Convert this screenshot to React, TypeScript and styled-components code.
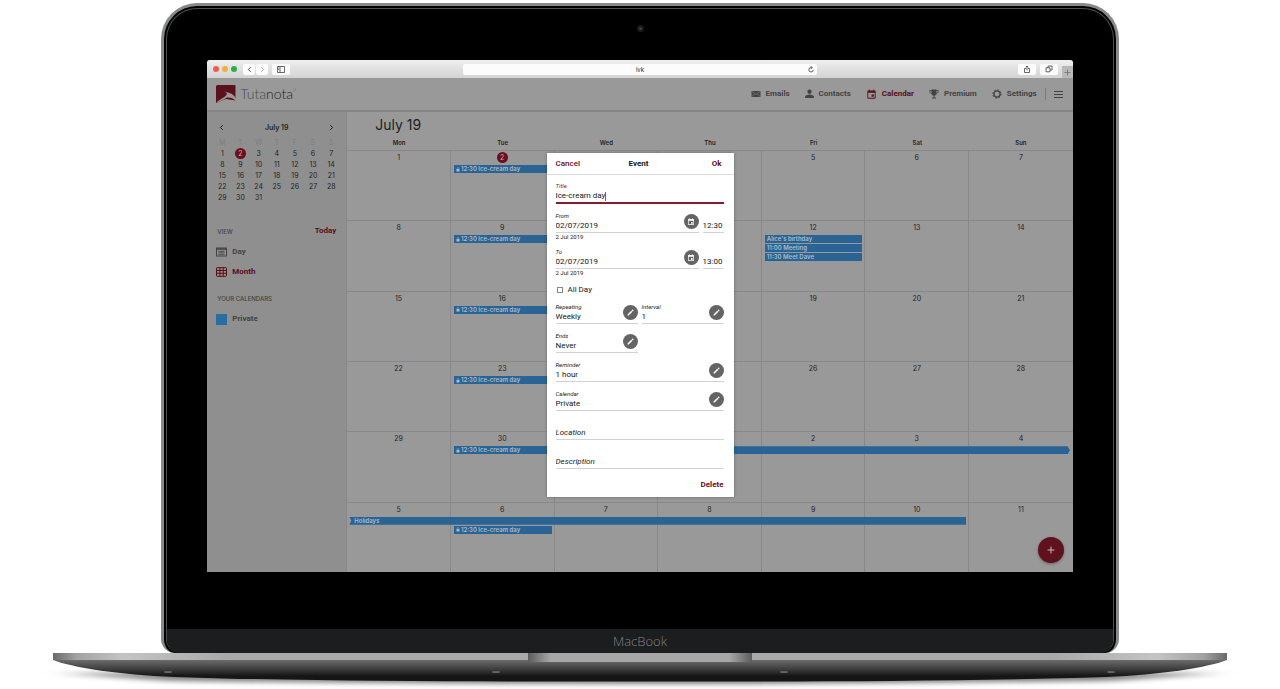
import React from "react";
import styled, { createGlobalStyle, css } from "styled-components";

const c = {
  ink: "#1f1f1f",
  muted: "#434343",
  accent: "#5a0d17",
  accentBright: "#861a30",
  line: "#888888",
  sheet: "#999999",
  side: "#8f8f8f",
  event: "#296494",
};

const GlobalStyle = createGlobalStyle`
  * { box-sizing: border-box; }
  body { margin: 0; background: #fff; font-family: Inter, "Liberation Sans", sans-serif; color: ${c.ink}; }
  button, input, select { font: inherit; color: inherit; border: 0; margin: 0; padding: 0; background: none; border-radius: 0; }
  button { cursor: pointer; }
  a { color: inherit; text-decoration: none; }
  svg { display: block; }
`;

/* ---------- laptop ---------- */

const Page = styled.div`
  padding-top: 3px;
  overflow: hidden;
`;

const Lid = styled.div`
  margin: 0 12.6%;
  padding: 2px 2px 0;
  border: 3px solid #87898a;
  border-bottom: 0;
  border-radius: 36px 36px 14px 14px;
  background: #000;
`;

const Bezel = styled.div`
  display: flex;
  flex-direction: column;
  overflow: hidden;
  border: 1px solid #4b4d4e;
  border-bottom: 0;
  border-radius: 31px 31px 14px 14px;
  background: #000;
`;

const CameraBar = styled.div`
  display: flex;
  justify-content: center;
  height: 51px;
  padding-top: 16px;
`;

const Camera = styled.span`
  width: 7px;
  height: 7px;
  border: 2px solid #16181a;
  border-radius: 50%;
  background: #3a3f46;
`;

const Chin = styled.div`
  margin-top: 57px;
  height: 24px;
  background: #1b1d1f;
  color: #818385;
  text-align: center;
  font: 300 13px/24px "Open Sans", sans-serif;
`;

const BaseArt = styled.svg`
  width: 100%;
  height: 36px;
`;

/* ---------- browser ---------- */

const Screen = styled.div`
  margin: 0 40px;
  border-radius: 3px 3px 0 0;
  overflow: hidden;
  background: ${c.sheet};
`;

const BrowserBar = styled.div`
  display: grid;
  grid-template-columns: 1fr 41% 1fr;
  align-items: center;
  height: 18px;
  background: linear-gradient(#efefef, #d3d3d3);
`;

const BarGroup = styled.div<{ $end?: boolean }>`
  display: flex;
  align-items: center;
  gap: 4px;
  height: 18px;
  padding-left: 6px;
  ${(p) => p.$end && css`justify-content: flex-end; padding-left: 0;`}
`;

const Light = styled.span<{ $color: string }>`
  width: 6px;
  height: 6px;
  border-radius: 50%;
  margin-right: -1px;
  background: ${(p) => p.$color};
`;

const ChromeButtons = styled.div`
  display: flex;
  gap: 1px;
  margin-left: 3px;
`;

const ChromeButton = styled.button<{ $wide?: boolean; $dim?: boolean }>`
  display: grid;
  place-items: center;
  width: ${(p) => (p.$wide ? 18 : 12)}px;
  height: 11px;
  border-radius: 2px;
  background: #fcfcfc;
  color: ${(p) => (p.$dim ? "#a5a5a5" : "#444")};
`;

const NewTab = styled.button`
  display: grid;
  place-items: center;
  align-self: flex-end;
  width: 11px;
  height: 12px;
  background: #b9b9b9;
  color: #777;
`;

const Address = styled.div`
  display: flex;
  align-items: center;
  height: 11px;
  padding: 0 3px;
  border-radius: 2px;
  background: #fcfcfc;
`;

const AddressInput = styled.input`
  flex: 1;
  min-width: 0;
  padding-left: 6px;
  text-align: center;
  font-size: 6px;
  line-height: 11px;
  outline: 0;
`;

/* ---------- application ---------- */

const AppArea = styled.div`
  position: relative;
`;

const Header = styled.header`
  display: flex;
  align-items: center;
  justify-content: space-between;
  height: 34px;
  padding: 0 10px 0 9px;
  border-bottom: 2px solid #858585;
`;

const Logo = styled.a`
  display: flex;
  align-items: center;
  gap: 4px;
  font: 300 14px/18px Lato, sans-serif;
  color: #4a4a4a;
  span { color: #222; }
  sup { font-size: 4px; line-height: 4px; vertical-align: 7px; }
`;

const Nav = styled.nav`
  display: flex;
  align-items: center;
  gap: 15px;
`;

const NavLink = styled.a<{ $active?: boolean }>`
  display: flex;
  align-items: center;
  gap: 5px;
  font-family: Roboto, sans-serif;
  font-size: 8px;
  line-height: 10px;
  font-weight: 700;
  color: ${(p) => (p.$active ? c.accent : c.muted)};
`;

const MenuButton = styled.button`
  margin-left: -7px;
  padding-left: 8px;
  border-left: 1px solid #7b7b7b;
  color: ${c.muted};
`;

const Body = styled.div`
  display: flex;
`;

const Sidebar = styled.aside`
  flex: 0 0 140px;
  padding: 10px 6px 0;
  border-right: 1px solid ${c.line};
  background: ${c.side};
`;

const MonthPicker = styled.div`
  display: flex;
  justify-content: space-between;
  align-items: center;
  height: 11px;
  padding: 0 6px;
  font-size: 7px;
  font-weight: 600;
`;

const MiniTable = styled.table`
  width: 100%;
  margin-top: 4px;
  border-collapse: collapse;
  table-layout: fixed;
  font-size: 7px;
  line-height: 11px;
  text-align: center;
  th, td { padding: 0; height: 11px; }
  th { font-weight: 400; color: #7e7e7e; }
`;

const Dot = styled.span`
  display: inline-block;
  width: 11px;
  height: 11px;
  line-height: 11px;
  border-radius: 50%;
  background: #6b0f1d;
  color: #c9a9ad;
`;

const SideHead = styled.div<{ $gap: number }>`
  display: flex;
  justify-content: space-between;
  align-items: center;
  height: 12px;
  margin-top: ${(p) => p.$gap}px;
  padding: 0 4px;
  font-size: 6px;
  font-weight: 500;
  color: ${c.muted};
`;

const TodayButton = styled.button`
  font-family: Roboto, sans-serif;
  font-size: 8px;
  line-height: 12px;
  font-weight: 700;
  color: ${c.accent};
`;

const SideLink = styled.button<{ $active?: boolean }>`
  display: flex;
  align-items: center;
  gap: 5px;
  width: 100%;
  height: 20px;
  padding: 0 3px;
  font-family: Roboto, sans-serif;
  font-size: 8px;
  line-height: 10px;
  font-weight: 700;
  color: ${(p) => (p.$active ? c.accent : c.muted)};
`;

const SideList = styled.div`
  margin-top: 5px;
`;

const Swatch = styled.span`
  width: 11px;
  height: 11px;
  background: #2b6da1;
`;

const Main = styled.main`
  flex: 1;
  min-width: 0;
`;

const MonthTitle = styled.h1`
  margin: 0;
  padding: 4px 28px 0;
  font-size: 14px;
  line-height: 18px;
  font-weight: 400;
`;

const Weekdays = styled.div`
  display: grid;
  grid-template-columns: repeat(7, 1fr);
  padding: 5px 0 3px;
  font-size: 6px;
  line-height: 8px;
  font-weight: 600;
  text-align: center;
`;

const Month = styled.div`
  display: grid;
  grid-template-rows: repeat(6, 1fr);
  min-height: 422px;
`;

const Week = styled.section`
  display: grid;
  grid-template-columns: repeat(7, 1fr);
  grid-template-rows: 13px 8px 8px 8px 1fr;
  row-gap: 1px;
  border-top: 1px solid ${c.line};
`;

const DayCell = styled.div<{ $col: number }>`
  grid-row: 1 / -1;
  grid-column: ${(p) => p.$col};
  padding-top: 1px;
  border-right: ${(p) => (p.$col < 7 ? `1px solid ${c.line}` : "0")};
  text-align: center;
  font-size: 7px;
  line-height: 11px;
`;

const EventBar = styled.a<{ $from: number; $to: number; $row: number; $cap?: "left" | "right" }>`
  grid-column: ${(p) => p.$from} / ${(p) => p.$to + 1};
  grid-row: ${(p) => p.$row + 1};
  display: flex;
  align-items: center;
  gap: 1px;
  margin: 0 3px;
  padding-left: 2px;
  background: ${c.event};
  color: #a9bccb;
  font-size: 6px;
  line-height: 8px;
  font-weight: 600;
  white-space: nowrap;
  overflow: hidden;
  ${(p) => p.$cap === "left" && css`
    margin-left: 2px;
    padding-left: 5px;
    clip-path: polygon(0 0, 100% 0, 100% 100%, 0 100%, 2px 50%);
  `}
  ${(p) => p.$cap === "right" && css`
    clip-path: polygon(0 0, calc(100% - 2px) 0, 100% 50%, calc(100% - 2px) 100%, 0 100%);
  `}
`;

const AddButton = styled.button`
  position: absolute;
  right: 9px;
  bottom: 9px;
  display: grid;
  place-items: center;
  width: 26px;
  height: 26px;
  border-radius: 50%;
  background: #5f121e;
  color: #c9b5b8;
  box-shadow: 0 1px 3px rgba(0, 0, 0, 0.35);
`;

/* ---------- dialog ---------- */

const Overlay = styled.div`
  position: absolute;
  inset: 0;
  display: grid;
  place-items: center;
  pointer-events: none;
`;

const Dialog = styled.form`
  width: 187px;
  background: #fff;
  pointer-events: auto;
  color: #161616;
  font-family: Roboto, sans-serif;
  font-size: 8px;
  line-height: 11px;
  box-shadow: 0 0 3px rgba(0, 0, 0, 0.3);
`;

const DialogHead = styled.div`
  display: grid;
  grid-template-columns: 1fr auto 1fr;
  align-items: center;
  height: 22px;
  padding: 0 12px 0 9px;
  border-bottom: 1px solid #d9dcde;
`;

const DialogTitle = styled.h2`
  margin: 0;
  font-size: 8px;
  font-weight: 700;
`;

const TextButton = styled.button<{ $bold?: boolean; $end?: boolean }>`
  justify-self: ${(p) => (p.$end ? "end" : "start")};
  line-height: 11px;
  color: #6b0a1d;
  font-weight: ${(p) => (p.$bold ? 700 : 500)};
`;

const DialogBody = styled.div`
  padding: 0 10px 0 9px;
`;

const Split = styled.div<{ $columns: string }>`
  display: grid;
  grid-template-columns: ${(p) => p.$columns};
  column-gap: 4px;
`;

const FieldBox = styled.div<{ $active?: boolean }>`
  display: flex;
  align-items: flex-end;
  height: 29px;
  border-bottom: ${(p) => (p.$active ? `2px solid ${c.accentBright}` : "1px solid #d2d2d2")};
`;

const FieldText = styled.div`
  flex: 1;
  min-width: 0;
`;

const FieldLabel = styled.label<{ $active?: boolean }>`
  display: block;
  font-size: 6px;
  line-height: 9px;
  font-style: italic;
  color: ${(p) => (p.$active ? c.accentBright : "#222")};
`;

const valueStyle = css`
  display: block;
  width: 100%;
  height: 12px;
  line-height: 12px;
  outline: 0;
`;

const ValueInput = styled.input<{ $fit?: boolean }>`
  ${valueStyle}
  ${(p) => p.$fit && css`width: auto; field-sizing: content;`}
  &::placeholder { color: #222; font-style: italic; opacity: 1; }
`;

const ValueSelect = styled.select`
  ${valueStyle}
  appearance: none;
`;

const CaretLine = styled.div`
  display: flex;
  align-items: center;
`;

const Caret = styled.span`
  width: 1px;
  height: 9px;
  background: #666;
`;

const RoundButton = styled.button`
  display: grid;
  place-items: center;
  flex: 0 0 15px;
  height: 15px;
  margin-bottom: 3px;
  border-radius: 50%;
  background: #646464;
  color: #fff;
`;

const Helper = styled.div`
  height: 7px;
  font-size: 6px;
  line-height: 8px;
`;

const CheckRow = styled.label`
  display: flex;
  align-items: flex-end;
  gap: 5px;
  height: 19px;
  padding-left: 1px;
  line-height: 10px;
`;

const Check = styled.input`
  appearance: none;
  width: 6px;
  height: 6px;
  margin-bottom: 2px;
  border: 1px solid #888;
`;

const DialogFoot = styled.div`
  display: flex;
  justify-content: flex-end;
  align-items: center;
  height: 28px;
  padding-top: 2px;
`;

/* ---------- icons ---------- */

const stroke = { fill: "none", stroke: "currentColor" } as const;

const Chevron = ({ flip }: { flip?: boolean }) => (
  <svg width="5" height="7" viewBox="0 0 5 7" {...stroke}>
    <path d={flip ? "M1.300 1.200 3.600 3.500 1.300 5.800" : "M3.700 1.200 1.400 3.500 3.700 5.800"} />
  </svg>
);

const CalendarGlyph = ({ size }: { size: number }) => (
  <svg width={size} height={size} viewBox="0 0 24 24" fill="currentColor">
    <path d="M17 12h-5v5h5v-5zM16 1v2H8V1H6v2H5a2 2 0 0 0-2 2v14a2 2 0 0 0 2 2h14a2 2 0 0 0 2-2V5a2 2 0 0 0-2-2h-1V1h-2zm3 18H5V8h14v11z" />
  </svg>
);

const MailGlyph = () => (
  <svg width="10" height="10" viewBox="0 0 20 20">
    <rect x="1" y="4" width="18" height="12" fill="currentColor" />
    <path d="m2 5 8 6 8-6M2 15l5-5m11 5-5-5" fill="none" stroke={c.sheet} strokeWidth="1" />
  </svg>
);

const PersonGlyph = () => (
  <svg width="9" height="10" viewBox="0 0 18 20" fill="currentColor">
    <circle cx="9" cy="5.5" r="4.3" />
    <path d="M0 18v-2c0-3 5-5 9-5s9 2 9 5v2z" />
  </svg>
);

const TrophyGlyph = () => (
  <svg width="10" height="10" viewBox="0 0 20 20">
    <path d="M5 1h10v6c0 4-2 6-4 6.500V17h3v2H6v-2h3v-3.500C7 13 5 11 5 7z" fill="currentColor" />
    <path d="M5 3H1.500c0 4 1.500 6 4.500 7m9-7h3.500c0 4-1.500 6-4.500 7" {...stroke} strokeWidth="1.800" />
  </svg>
);

const GearGlyph = () => (
  <svg width="10" height="10" viewBox="0 0 20 20" {...stroke}>
    <circle cx="10" cy="10" r="6.200" strokeWidth="2.600" />
    <circle cx="10" cy="10" r="8.300" strokeWidth="2" strokeDasharray="3.260 3.260" />
  </svg>
);

const Pencil = () => (
  <svg width="9" height="9" viewBox="0 0 24 24" fill="currentColor">
    <path d="M4 17v3h3L17 10l-3-3L4 17zM20 7a1 1 0 0 0 0-1l-2-2a1 1 0 0 0-1 0l-2 2 3 3 2-2z" />
  </svg>
);

const Plus = ({ size }: { size: number }) => (
  <svg width={size} height={size} viewBox="0 0 8 8" {...stroke}>
    <path d="M4 .5v7M.5 4h7" />
  </svg>
);

const LockGlyph = () => (
  <svg width="4" height="5" viewBox="0 0 8 10">
    <rect x="1" y="4" width="6" height="5" fill="currentColor" />
    <path d="M2.500 4V2.500a1.500 1.500 0 0 1 3 0V4" {...stroke} />
  </svg>
);

const AgendaGlyph = () => (
  <svg width="11" height="10" viewBox="0 0 11 10" {...stroke}>
    <rect x=".5" y="1" width="10" height="8" />
    <path d="M1 2h9" strokeWidth="1.500" />
    <path d="M2.500 4.300h6M2.500 5.900h6M2.500 7.500h6" strokeWidth="1.200" opacity=".7" />
  </svg>
);

const GridGlyph = () => (
  <svg width="11" height="10" viewBox="0 0 11 10" {...stroke}>
    <rect x=".5" y=".7" width="10" height="8.600" rx=".6" />
    <path d="M.5 3.500h10M.5 6.300h10M3.900 .7v8.600M7.200 .7v8.600" />
  </svg>
);

const LogoMark = () => (
  <svg width="20" height="18" viewBox="0 0 20 18">
    <path d="M1.500 0H18.500a1 1 0 0 1 1 1v14.500L10 14 0 18V1.500A1.500 1.500 0 0 1 1.500 0z" fill="#5b101e" />
    <path d="M7 6.200c3 .9 4.200 1.600 3.800 3C9.900 12 4 13.800 0 18c4-2 8.200-3.300 10.300-5.300 3.400-.6 6.600 .2 9.700 3.600V13.500c-1.500-2.800-4-4.600-6.600-5.400C11.500 7.300 9 6.700 7 6.200z" fill="#9b9797" />
  </svg>
);

const LaptopBase = () => (
  <BaseArt viewBox="0 0 1280 36" preserveAspectRatio="none" aria-hidden="true">
    <defs>
      <linearGradient id="under" x1="0" y1="0" x2="0" y2="1">
        <stop offset="0.240" stopColor="#6c6c6c" />
        <stop offset="0.600" stopColor="#383838" />
        <stop offset="0.800" stopColor="#161616" />
        <stop offset="1" stopColor="#151515" />
      </linearGradient>
      <linearGradient id="edge">
        <stop offset="0" stopColor="#6a6a6a" />
        <stop offset="0.020" stopColor="#a2a2a2" />
        <stop offset="0.060" stopColor="#c4c4c4" />
        <stop offset="0.150" stopColor="#a8a8a8" />
        <stop offset="0.850" stopColor="#a8a8a8" />
        <stop offset="0.940" stopColor="#c4c4c4" />
        <stop offset="0.980" stopColor="#a2a2a2" />
        <stop offset="1" stopColor="#6a6a6a" />
      </linearGradient>
      <linearGradient id="notch">
        <stop offset="0" stopColor="#5c5c5c" />
        <stop offset="0.100" stopColor="#a6a6a6" />
        <stop offset="0.900" stopColor="#a6a6a6" />
        <stop offset="1" stopColor="#5c5c5c" />
      </linearGradient>
      <filter id="soft" x="-10%" y="-100%" width="120%" height="300%">
        <feGaussianBlur stdDeviation="14 2.500" />
      </filter>
    </defs>
    <path d="M60 20H1220L1110 28Q640 34 170 28Z" fill="#000" opacity=".5" filter="url(#soft)" />
    <path d="M53 0H1227V7C1210 14 1160 22 1106 24C960 28.500 800 28.500 640 28.500S320 28.500 174 24C120 22 70 14 53 7Z" fill="url(#under)" />
    <path d="M53 0H1227V6Q1227 7 1225 7H55Q53 7 53 6Z" fill="url(#edge)" />
    <path d="M528 0H752V7Q752 9 749 9H531Q528 9 528 7Z" fill="url(#notch)" />
    {[168, 496, 784, 1111].map((x) => (
      <ellipse key={x} cx={x} cy="19" rx="4" ry="1" fill="#666" />
    ))}
  </BaseArt>
);

/* ---------- content ---------- */

const dayNames = ["Mon", "Tue", "Wed", "Thu", "Fri", "Sat", "Sun"];
const weekStarts = [1, 8, 15, 22, 29, 36];

type CalendarEvent = { text: string; from: number; to: number; row: number; lock?: boolean; cap?: "left" | "right" };

const iceCream = (row = 1): CalendarEvent => ({ text: "12:30 Ice-cream day", from: 2, to: 2, row, lock: true });

const events: CalendarEvent[][] = [
  [iceCream()],
  [
    iceCream(),
    { text: "Alice's birthday", from: 5, to: 5, row: 1 },
    { text: "11:00 Meeting", from: 5, to: 5, row: 2 },
    { text: "11:30 Meet Dave", from: 5, to: 5, row: 3 },
  ],
  [iceCream()],
  [iceCream()],
  [iceCream(), { text: "", from: 4, to: 7, row: 1, cap: "right" }],
  [{ text: "Holidays", from: 1, to: 6, row: 1, cap: "left" }, iceCream(2)],
];

const dayOfMonth = (n: number) => (n > 31 ? n - 31 : n);

const PickerField = ({ id, label, value }: { id: string; label: string; value: string }) => (
  <FieldBox>
    <FieldText>
      <FieldLabel htmlFor={id}>{label}</FieldLabel>
      <ValueSelect id={id} defaultValue={value}>
        <option>{value}</option>
      </ValueSelect>
    </FieldText>
    <RoundButton type="button" aria-label={`Edit ${label}`}>
      <Pencil />
    </RoundButton>
  </FieldBox>
);

const DateRow = ({ id, label, time }: { id: string; label: string; time: string }) => (
  <>
    <Split $columns="1fr 21px">
      <FieldBox>
        <FieldText>
          <FieldLabel htmlFor={id}>{label}</FieldLabel>
          <ValueInput id={id} defaultValue="02/07/2019" />
        </FieldText>
        <RoundButton type="button" aria-label={`Pick ${label} date`}>
          <CalendarGlyph size={8} />
        </RoundButton>
      </FieldBox>
      <FieldBox>
        <ValueInput aria-label={`${label} time`} defaultValue={time} />
      </FieldBox>
    </Split>
    <Helper>2 Jul 2019</Helper>
  </>
);

const EventDialog = () => (
  <Dialog role="dialog" aria-label="Event" onSubmit={(e) => e.preventDefault()}>
    <DialogHead>
      <TextButton type="button">Cancel</TextButton>
      <DialogTitle>Event</DialogTitle>
      <TextButton $bold $end>Ok</TextButton>
    </DialogHead>
    <DialogBody>
      <FieldBox $active>
        <FieldText>
          <FieldLabel $active htmlFor="title">Title</FieldLabel>
          <CaretLine>
            <ValueInput $fit id="title" defaultValue="Ice-cream day" />
            <Caret />
          </CaretLine>
        </FieldText>
      </FieldBox>
      <DateRow id="from" label="From" time="12:30" />
      <DateRow id="to" label="To" time="13:00" />
      <CheckRow>
        <Check type="checkbox" />
        All Day
      </CheckRow>
      <Split $columns="1fr 1fr">
        <PickerField id="repeating" label="Repeating" value="Weekly" />
        <PickerField id="interval" label="Interval" value="1" />
        <PickerField id="ends" label="Ends" value="Never" />
      </Split>
      <PickerField id="reminder" label="Reminder" value="1 hour" />
      <PickerField id="calendar" label="Calendar" value="Private" />
      <FieldBox>
        <ValueInput aria-label="Location" placeholder="Location" />
      </FieldBox>
      <FieldBox>
        <ValueInput aria-label="Description" placeholder="Description" />
      </FieldBox>
      <DialogFoot>
        <TextButton type="button" $bold>Delete</TextButton>
      </DialogFoot>
    </DialogBody>
  </Dialog>
);

const Browser = () => (
  <BrowserBar>
    <BarGroup>
      <Light $color="#ee5b52" />
      <Light $color="#f0b13a" />
      <Light $color="#2fae48" />
      <ChromeButtons>
        <ChromeButton aria-label="Back"><Chevron /></ChromeButton>
        <ChromeButton $dim aria-label="Forward"><Chevron flip /></ChromeButton>
      </ChromeButtons>
      <ChromeButton $wide aria-label="Show sidebar">
        <svg width="8" height="7" viewBox="0 0 8 7" {...stroke}>
          <path d="M.5 .5h7v6h-7zM3 .5v6M1.200 2h1M1.200 3.500h1" strokeWidth=".8" />
        </svg>
      </ChromeButton>
    </BarGroup>
    <Address>
      <AddressInput aria-label="Address" defaultValue="lvk" />
      <svg width="6" height="7" viewBox="0 0 6 7" {...stroke}>
        <path d="M5.200 3.800A2.200 2.200 0 1 1 3 1.600h1M3 .3l1.300 1.300L3 2.900" strokeWidth=".7" />
      </svg>
    </Address>
    <BarGroup $end>
      <ChromeButton $wide aria-label="Share">
        <svg width="8" height="9" viewBox="0 0 8 9" {...stroke}>
          <path d="M3 3.500H1.500v4h5v-4H5M4 5.500V1M2.700 2.200 4 1l1.300 1.200" strokeWidth=".8" />
        </svg>
      </ChromeButton>
      <ChromeButton $wide aria-label="Show tabs">
        <svg width="8" height="8" viewBox="0 0 8 8" {...stroke}>
          <path d="M1 2.800h4v4H1zM3 2.800V1h4v4H5" strokeWidth=".8" />
        </svg>
      </ChromeButton>
      <NewTab aria-label="New tab"><Plus size={7} /></NewTab>
    </BarGroup>
  </BrowserBar>
);

const AppHeader = () => (
  <Header>
    <Logo href="#">
      <LogoMark />
      <div>Tuta<span>nota</span><sup>®</sup></div>
    </Logo>
    <Nav>
      <NavLink href="#"><MailGlyph />Emails</NavLink>
      <NavLink href="#"><PersonGlyph />Contacts</NavLink>
      <NavLink href="#" $active><CalendarGlyph size={11} />Calendar</NavLink>
      <NavLink href="#"><TrophyGlyph />Premium</NavLink>
      <NavLink href="#"><GearGlyph />Settings</NavLink>
      <MenuButton aria-label="Menu">
        <svg width="9" height="12" viewBox="0 0 9 12" {...stroke}>
          <path d="M0 3.500h9M0 6.500h9M0 9.500h9" />
        </svg>
      </MenuButton>
    </Nav>
  </Header>
);

const SidePanel = () => (
  <Sidebar>
    <MonthPicker>
      <Chevron />
      <span>July 19</span>
      <Chevron flip />
    </MonthPicker>
    <MiniTable>
      <thead>
        <tr>{dayNames.map((d) => <th key={d}>{d[0]}</th>)}</tr>
      </thead>
      <tbody>
        {weekStarts.slice(0, 5).map((start) => (
          <tr key={start}>
            {dayNames.map((d, i) => (
              <td key={d}>{start + i === 2 ? <Dot>2</Dot> : start + i <= 31 ? start + i : ""}</td>
            ))}
          </tr>
        ))}
      </tbody>
    </MiniTable>
    <SideHead $gap={22}>
      VIEW
      <TodayButton>Today</TodayButton>
    </SideHead>
    <SideList>
      <SideLink><AgendaGlyph />Day</SideLink>
      <SideLink $active><GridGlyph />Month</SideLink>
    </SideList>
    <SideHead $gap={10}>YOUR CALENDARS</SideHead>
    <SideList>
      <SideLink><Swatch />Private</SideLink>
    </SideList>
  </Sidebar>
);

const MonthView = () => (
  <Main>
    <MonthTitle>July 19</MonthTitle>
    <Weekdays>{dayNames.map((d) => <span key={d}>{d}</span>)}</Weekdays>
    <Month>
      {weekStarts.map((start, w) => (
        <Week key={start}>
          {dayNames.map((d, i) => (
            <DayCell key={d} $col={i + 1}>
              {start + i === 2 ? <Dot>2</Dot> : dayOfMonth(start + i)}
            </DayCell>
          ))}
          {events[w].map((e) => (
            <EventBar key={e.text + e.row} href="#" $from={e.from} $to={e.to} $row={e.row} $cap={e.cap}>
              {e.lock && <LockGlyph />}
              {e.text}
            </EventBar>
          ))}
        </Week>
      ))}
    </Month>
  </Main>
);

export default function App() {
  return (
    <Page>
      <GlobalStyle />
      <Lid>
        <Bezel>
          <CameraBar><Camera /></CameraBar>
          <Screen>
            <Browser />
            <AppArea>
              <AppHeader />
              <Body>
                <SidePanel />
                <MonthView />
              </Body>
              <AddButton aria-label="New event"><Plus size={8} /></AddButton>
              <Overlay>
                <EventDialog />
              </Overlay>
            </AppArea>
          </Screen>
          <Chin>MacBook</Chin>
        </Bezel>
      </Lid>
      <LaptopBase />
    </Page>
  );
}
